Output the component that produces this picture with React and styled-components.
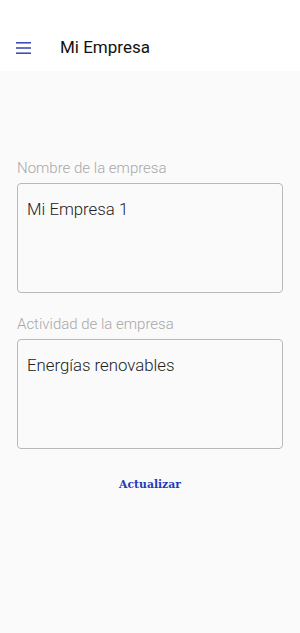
import React from "react";
import styled, { createGlobalStyle } from "styled-components";

const GlobalStyle = createGlobalStyle`
  html, body {
    margin: 0;
    padding: 0;
    background-color: #fafafa;
  }
  body {
    font-family: Roboto, "Noto Sans", sans-serif;
  }
`;

const Screen = styled.div`
  display: flex;
  flex-direction: column;
  width: 300px;
  min-height: 633px;
  background-color: #fafafa;
`;

const Header = styled.header`
  display: flex;
  align-items: center;
  height: 71px;
  padding: 22px 0 0 16px;
  background-color: #ffffff;
  box-sizing: border-box;
`;

const MenuButton = styled.div`
  display: flex;
  width: 15px;
  height: 12px;
  margin-top: 2px;
`;

const Title = styled.h1`
  margin: 0 0 0 29px;
  font-family: Roboto, sans-serif;
  font-size: 17px;
  font-weight: 400;
  color: #111111;
`;

const Form = styled.div`
  display: flex;
  flex-direction: column;
  padding: 88px 17px 0 17px;
`;

const Field = styled.div`
  display: flex;
  flex-direction: column;
  margin-bottom: 22px;
`;

const Label = styled.label`
  font-family: Roboto, sans-serif;
  font-weight: 300;
  font-size: 15px;
  color: #a8a8a8;
  line-height: 18px;
  margin-bottom: 6px;
`;

const Box = styled.div`
  height: 110px;
  border: 1px solid #b9b9b9;
  border-radius: 4px;
  box-sizing: border-box;
  padding: 13px 9px;
  font-family: Roboto, sans-serif;
  font-weight: 300;
  font-size: 16.8px;
  line-height: 24px;
  color: #222222;
`;

const Action = styled.button`
  align-self: center;
  margin-top: 3px;
  border: none;
  background: transparent;
  font-family: "DejaVu Serif", serif;
  font-weight: 700;
  font-size: 10.8px;
  color: #1f3cb8;
  padding: 4px 8px;
`;

function HamburgerIcon() {
  return (
    <svg viewBox="0 0 15 12" width={15} height={12}>
      <rect x="0" y="0" width="15" height="1.6" fill="#3f51b5" />
      <rect x="0" y="5.2" width="15" height="1.6" fill="#3f51b5" />
      <rect x="0" y="10.4" width="15" height="1.6" fill="#3f51b5" />
    </svg>
  );
}

export default function App() {
  return (
    <Screen>
      <GlobalStyle />
      <Header>
        <MenuButton>
          <HamburgerIcon />
        </MenuButton>
        <Title>Mi Empresa</Title>
      </Header>
      <Form>
        <Field>
          <Label>Nombre de la empresa</Label>
          <Box>Mi Empresa 1</Box>
        </Field>
        <Field>
          <Label>Actividad de la empresa</Label>
          <Box>Energías renovables</Box>
        </Field>
        <Action>Actualizar</Action>
      </Form>
    </Screen>
  );
}
